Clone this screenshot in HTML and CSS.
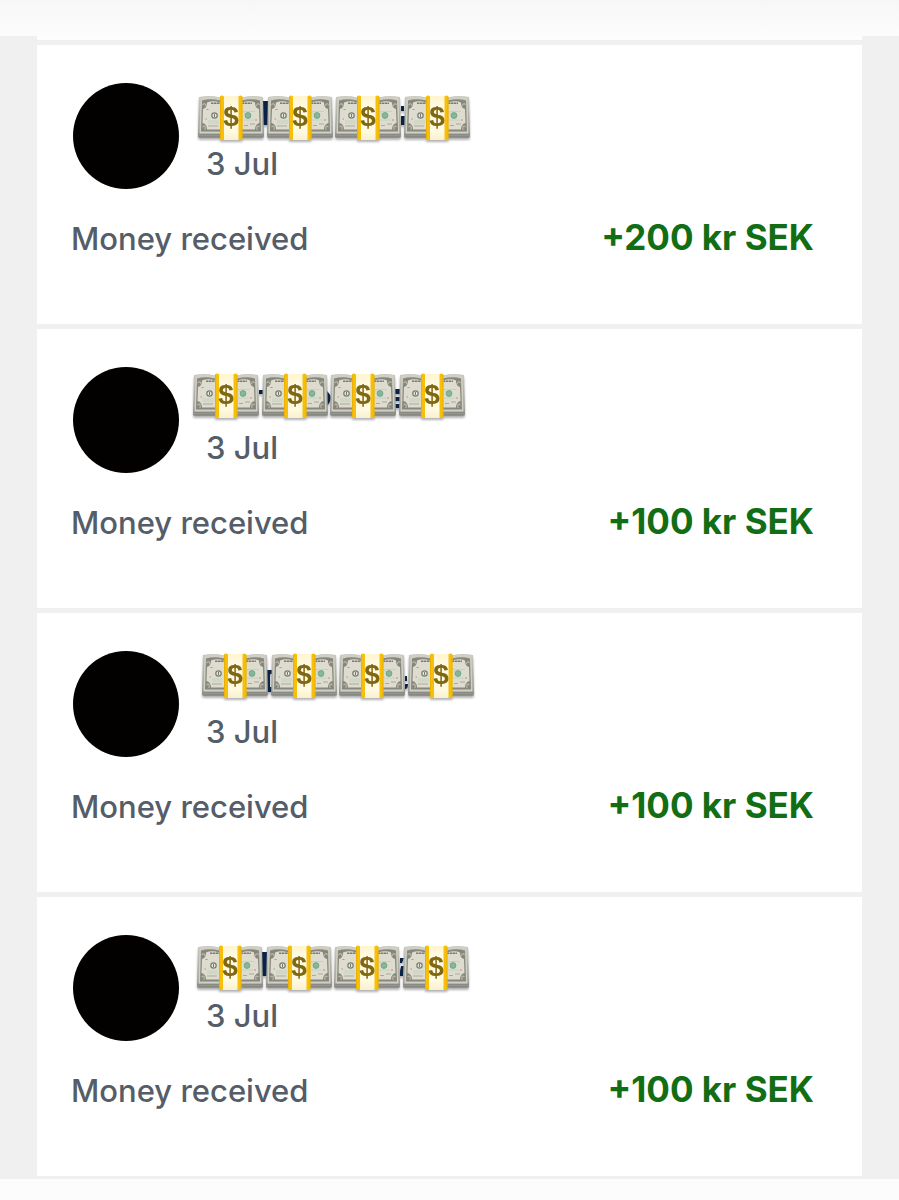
FILE: index.html
```html
<!DOCTYPE html>
<html lang="en">
<head>
<meta charset="utf-8">
<meta name="viewport" content="width=device-width, initial-scale=1">
<title>Transactions</title>
<link rel="stylesheet" href="styles.css">
</head>
<body>
<svg class="defs" aria-hidden="true">
  <defs>
    <linearGradient id="stack" x1="0" y1="0" x2="0" y2="1">
      <stop offset="0" stop-color="#c9c9c0"/><stop offset=".75" stop-color="#a3a399"/><stop offset="1" stop-color="#8f8f88"/>
    </linearGradient>
    <linearGradient id="band" x1="0" y1="0" x2="0" y2="1">
      <stop offset="0" stop-color="#fff4cc"/><stop offset=".25" stop-color="#fffbe8"/><stop offset=".8" stop-color="#fffae0"/><stop offset="1" stop-color="#f8f0d0"/>
    </linearGradient>
    <g id="bundle">
      <path d="M1 2Q12 0 22 2.500H44Q54 0 65 2L66 41Q66 43 64 43H2Q0 43 0 41Z" fill="url(#stack)"/>
      <path d="M.5 39.500H65.500M.5 41.500H65.500" stroke="#858580" stroke-width=".6"/>
      <path d="M2.500 2.500Q12 .8 22 3H44Q54 .8 63.500 2.500L64.500 38.500H1.500Z" fill="#d0cfc4"/>
      <path d="M4 5.500Q12 3 22 5.500H44Q54 3 62 5.500L63 36.500H3Z" fill="#87877d"/>
      <path d="M9 7.500Q15 5 22 7.500H44Q52 5 57 7.500Q57 13 61 14L61.500 28Q57 29 57 34.500H9Q9 29 4.500 28L5 14Q9 13 9 7.500Z" fill="#dedccf"/>
      <path d="M4.500 10Q7 7 8 11M58 11Q60 7 61.500 10M4.500 32Q8 29 7 35M59 35Q58 29 61.500 32" fill="none" stroke="#b9b8aa" stroke-width="1.200"/>
      <path d="M13 8.200H22M44 8.200H54" stroke="#7a7a70" stroke-width="1.600" stroke-dasharray="2.500 .5"/>
      <circle cx="16.500" cy="20.500" r="2.700" fill="#e6e5d8" stroke="#777b70" stroke-width="1.200"/>
      <path d="M16.500 19V22" stroke="#777b70"/>
      <circle cx="50" cy="20.500" r="2.900" fill="#86b79a" stroke="#5fa17c" stroke-width=".8"/>
      <path d="M45 16.500H57M45 18H47M45 25H56M10 26H21M10 28H21" stroke="#bdd1bf" stroke-width=".9"/>
      <path d="M46 30.500H50M52 29H57M10 31H20" stroke="#aaa99c" stroke-width="1"/>
      <path d="M8.500 14.500H10.500M7.500 24H9M57 25H59" stroke="#c58d75" stroke-width="1"/>
      <path d="M22 1H44V45H22Z" fill="url(#band)"/>
      <path d="M22 1.500Q24 -.5 26 1.500V45H22.500Q22 45 22 44ZM40.500 1.500Q42.500 -.5 44.500 1.500V44Q44.500 45 44 45H40.500Z" fill="#f7bf08"/>
      <path d="M22.500 2V44M44 2V44" stroke="#e4ab02" stroke-width=".7"/>
      <text x="33" y="31" class="dollar">$</text>
    </g>
    <g id="bundles">
      <use href="#bundle"/><use href="#bundle" x="69"/><use href="#bundle" x="137"/><use href="#bundle" x="206"/>
    </g>
  </defs>
</svg>

<header class="topbar"></header>
<main class="page">
  <div class="previous"></div>
  <ul class="list">
    <li class="card">
      <div class="person">
        <div class="avatar"></div>
        <time class="date">3 Jul</time>
        <svg class="cover cover-a" viewBox="0 0 274 48" role="img" aria-label="Name covered by banknotes">
          <path d="M65 6H70V30H65ZM203 11H206V16H203ZM203 21H207V30H203Z" fill="#0b2247"/>
          <use href="#bundles"/>
        </svg>
      </div>
      <div class="detail"><span class="type">Money received</span><strong class="amount">+200 kr SEK</strong></div>
    </li>
    <li class="card">
      <div class="person">
        <div class="avatar"></div>
        <time class="date">3 Jul</time>
        <svg class="cover cover-b" viewBox="0 0 274 48" role="img" aria-label="Name covered by banknotes">
          <path d="M66 17H70V21H66ZM134 18Q138 22 138 25T134 33ZM202 16H208V21H202ZM202 24H208V28H202ZM202 31H208V35H202Z" fill="#0b2247"/>
          <use href="#bundles"/>
        </svg>
      </div>
      <div class="detail"><span class="type">Money received</span><strong class="amount">+100 kr SEK</strong></div>
    </li>
    <li class="card">
      <div class="person">
        <div class="avatar"></div>
        <time class="date">3 Jul</time>
        <svg class="cover cover-c" viewBox="0 0 274 48" role="img" aria-label="Name covered by banknotes">
          <path d="M65 17H70V21H68V34H70V39H65ZM203 23H205V28H203ZM203 31H206Q206 36 203 36Z" fill="#0b2247"/>
          <use href="#bundles"/>
        </svg>
      </div>
      <div class="detail"><span class="type">Money received</span><strong class="amount">+100 kr SEK</strong></div>
    </li>
    <li class="card">
      <div class="person">
        <div class="avatar"></div>
        <time class="date">3 Jul</time>
        <svg class="cover cover-d" viewBox="0 0 274 48" role="img" aria-label="Name covered by banknotes">
          <path d="M65 7H70V31H65ZM203 13H207L205 18H203ZM204 21H207L206 31H203V26Z" fill="#0b2247"/>
          <use href="#bundles"/>
        </svg>
      </div>
      <div class="detail"><span class="type">Money received</span><strong class="amount">+100 kr SEK</strong></div>
    </li>
  </ul>
</main>
<footer class="bottombar"></footer>
</body>
</html>
```
FILE: styles.css
```css
* { box-sizing: border-box; }

body {
  margin: 0;
  min-height: 100vh;
  display: flex;
  flex-direction: column;
  background: #fcfcfc;
  color: #545d68;
  font-family: Inter, "Liberation Sans", sans-serif;
  font-weight: 500;
}

.defs { position: absolute; width: 0; height: 0; }

.topbar {
  height: 36px;
  background: linear-gradient(#f7f7f7, #fafafa 60%, #fcfcfc);
}

.page {
  padding: 0 37px 3px;
  background: #f0f0f0;
}

.previous { height: 4px; background: #fdfdfd; }

.list {
  list-style: none;
  margin: 0;
  padding: 5px 0 0;
  display: flex;
  flex-direction: column;
  gap: 5px;
}

.card {
  padding: 38px 48px 65px 34px;
  background: #fff;
}

.person {
  position: relative;
  display: flex;
  align-items: flex-end;
  gap: 27px;
  padding-left: 2px;
}

.avatar {
  width: 106px;
  height: 106px;
  border-radius: 50%;
  background: #020100;
}

.date {
  padding-bottom: 5px;
  font-size: 31px;
  line-height: 40px;
}

/* Sticker strips dropped by hand over each name */
.cover {
  position: absolute;
  width: 274px;
  height: 48px;
  overflow: visible;
  filter: drop-shadow(0 2px 1px rgba(0, 0, 0, 0.3));
}
.cover-a { left: 127px; top: 12px; }
.cover-b { left: 122px; top: 6px; }
.cover-c { left: 131px; top: 2px; }
.cover-d { left: 126px; top: 10px; }

.dollar {
  font: bold 28px "Liberation Sans", sans-serif;
  fill: #806711;
  text-anchor: middle;
}

.detail {
  display: flex;
  justify-content: space-between;
  align-items: baseline;
  padding-top: 28px;
}

.type { font-size: 31px; line-height: 40px; }

.amount {
  color: #126e14;
  font-size: 35px;
  font-weight: 700;
  line-height: 40px;
}

.bottombar { flex: 1; }
```
